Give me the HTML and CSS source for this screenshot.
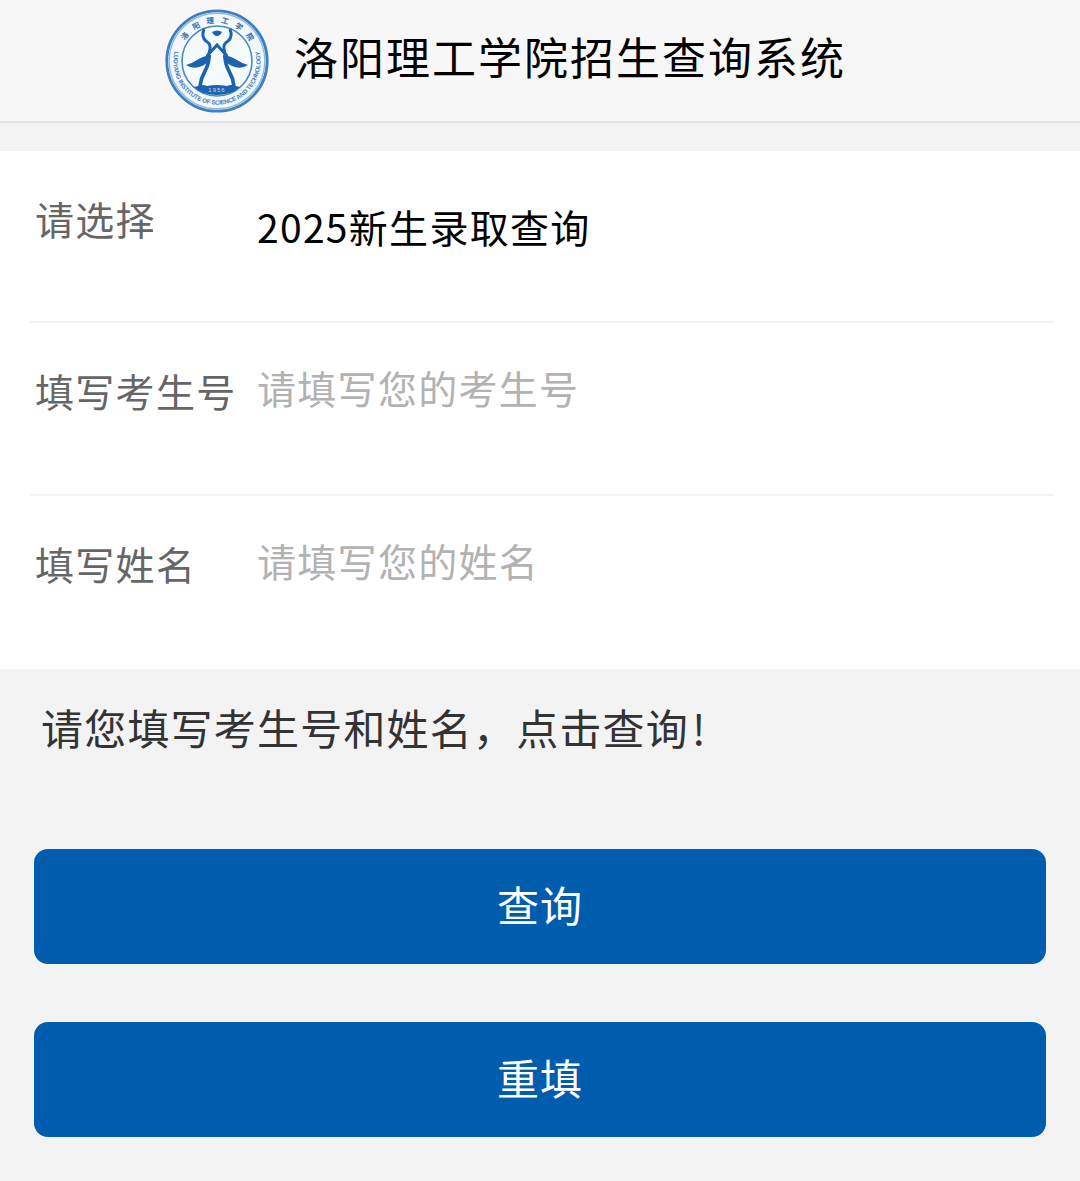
FILE: index.html
```html
<!DOCTYPE html>
<html lang="zh-CN">
<head>
    <meta charset="UTF-8">
    <meta name="viewport" content="width=device-width, initial-scale=1.0">
    <title>洛阳理工学院招生查询系统</title>
    <link rel="stylesheet" href="styles.css">
</head>
<body>
    <header class="header">
        <svg class="logo" viewBox="0 0 104 104" width="104" height="104">
            <defs>
                <path id="arcTop" d="M14 52a38 38 0 0 1 76 0"/>
                <path id="arcBottom" d="M11.4 36.5a43.5 43.5 0 1 0 81.2 0"/>
            </defs>
            <circle cx="52" cy="52" r="50.2" fill="#f2f8fc" stroke="#3f7fbd" stroke-width="2.8"/>
            <circle cx="52" cy="52" r="47.8" fill="none" stroke="#8fbae0" stroke-width="1.4"/>
            <circle cx="52" cy="52" r="35" fill="#f5fafd" stroke="#4c88c1" stroke-width="1.6"/>
            <text class="logo-cn"><textPath href="#arcTop" startOffset="53%" text-anchor="middle">洛阳理工学院</textPath></text>
            <text class="logo-en"><textPath href="#arcBottom" startOffset="50%" text-anchor="middle" textLength="156">LUOYANG INSTITUTE OF SCIENCE AND TECHNOLOGY</textPath></text>
            <g fill="#1c62ae">
                <path d="M47 23q5-3 10 0q-2 4-5 4q-3 0-5-4z"/>
                <path d="M46 46q-8 1-14 5q-6 4-11 5q6 4 13 2q8-2 12-10z"/>
                <path d="M58 46q8 1 14 5q6 4 11 5q-6 4-13 2q-8-2-12-10z"/>
                <path d="M33 77q5-2 9 0q10-2 20 0q4-2 9 0l4 1q-8 8-23 8q-15 0-23-8z"/>
            </g>
            <g fill="none" stroke="#1c62ae" stroke-width="3">
                <path d="M39 20q-3 8 2 12q5 3 4 8q0 4-3 8"/>
                <path d="M65 20q3 8-2 12q-5 3-4 8q0 4 3 8"/>
                <path d="M42 47l10-11l10 11"/>
                <path d="M44 47q0 8-4 15q-4 7-5 15" stroke-width="3.6"/>
                <path d="M60 47q0 8 4 15q4 7 5 15" stroke-width="3.6"/>
            </g>
            <text class="logo-year" x="52" y="83" text-anchor="middle">1956</text>
        </svg>
        <h1 class="title">洛阳理工学院招生查询系统</h1>
    </header>

    <form id="queryForm">
        <div class="panel">
            <div class="row row-select">
                <label for="type">请选择</label>
                <select id="type" name="type">
                    <option>2025新生录取查询</option>
                </select>
            </div>
            <div class="row">
                <label for="ksh">填写考生号</label>
                <input type="text" id="ksh" name="ksh" placeholder="请填写您的考生号">
            </div>
            <div class="row">
                <label for="xm">填写姓名</label>
                <input type="text" id="xm" name="xm" placeholder="请填写您的姓名">
            </div>
        </div>

        <p class="hint">请您填写考生号和姓名，点击查询<span class="mark">!</span></p>

        <div class="buttons">
            <button type="submit">查询</button>
            <button type="reset">重填</button>
        </div>
    </form>
</body>
</html>
```
FILE: styles.css
```css
* {
    box-sizing: border-box;
}
body {
    margin: 0;
    background-color: #f3f3f3;
    font-family: "Noto Sans CJK SC", sans-serif;
}
.header {
    display: flex;
    align-items: center;
    height: 123px;
    padding-left: 165px;
    background-color: #f7f7f7;
    border-bottom: 2px solid #e5e5e5;
}
.logo {
    flex: none;
}
.logo-cn {
    font-size: 7.5px;
    font-weight: bold;
    letter-spacing: 6.5px;
    fill: #2d6cab;
}
.logo-en {
    font-family: "Liberation Sans", sans-serif;
    font-size: 6.2px;
    font-weight: bold;
    fill: #4680b8;
}
.logo-year {
    font-family: "Liberation Sans", sans-serif;
    font-size: 6px;
    letter-spacing: 1px;
    fill: #c4dbf0;
}
.title {
    margin: 0 0 9px 25px;
    font-size: 44px;
    font-weight: normal;
    line-height: 60px;
    letter-spacing: 2px;
    white-space: nowrap;
    color: #000;
}
.panel {
    margin-top: 28px;
    padding: 0 27px 0 30px;
    background-color: #fff;
}
.row {
    display: flex;
    align-items: flex-start;
    height: 173px;
    padding: 39px 0 0 5px;
    border-bottom: 2px solid #f1f1f1;
}
.row:first-child {
    height: 172px;
}
.row:last-child {
    border-bottom: none;
}
.row label {
    width: 222px;
    font-size: 39px;
    line-height: 56px;
    letter-spacing: 1.3px;
    color: #666;
}
.row select,
.row input {
    flex: 1;
    height: 56px;
    margin: 0;
    padding: 0;
    border: none;
    outline: none;
    background: none;
    font-family: inherit;
    font-size: 39px;
    line-height: 56px;
    letter-spacing: 1.3px;
    color: #000;
    appearance: none;
}
.row input {
    margin-top: -3px;
}
.row-select select {
    margin-top: 8px;
}
.row input::placeholder {
    color: #b2b2b2;
    opacity: 1;
}
.hint {
    margin: 0;
    padding: 28px 41px 0;
    font-size: 42px;
    line-height: 60px;
    letter-spacing: 1.2px;
    color: #333;
}
.mark {
    margin-left: 3px;
}
.buttons {
    display: flex;
    flex-direction: column;
    gap: 58px;
    padding: 92px 34px 44px;
}
.buttons button {
    height: 115px;
    padding: 0 0 7px;
    border: none;
    border-radius: 14px;
    background-color: #005dad;
    font-family: inherit;
    font-size: 42px;
    letter-spacing: 1px;
    color: #fff;
    cursor: pointer;
}
```
